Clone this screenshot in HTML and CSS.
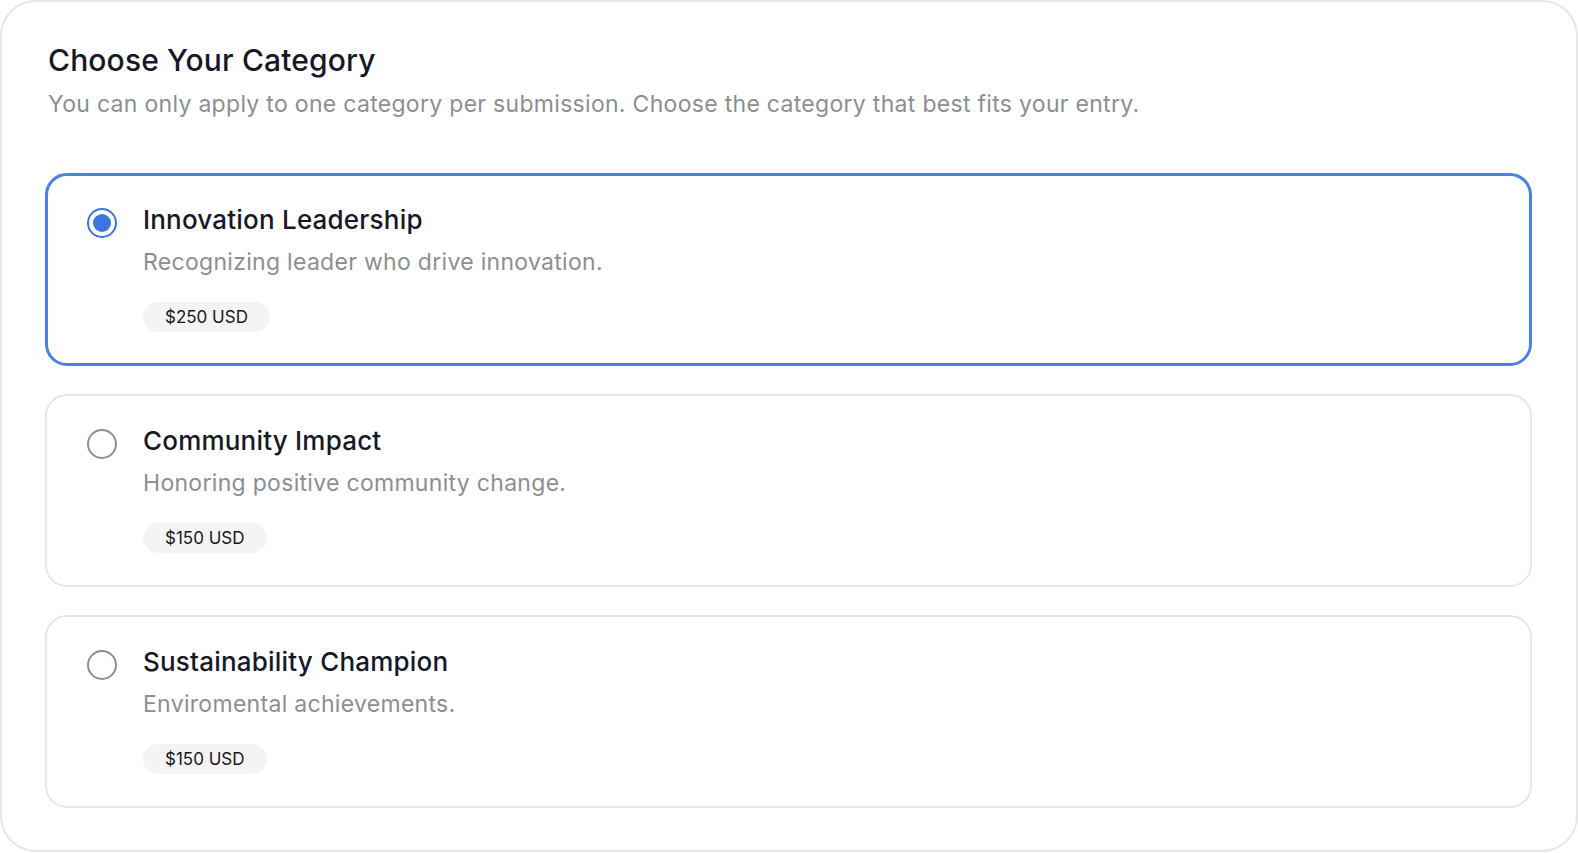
FILE: index.html
```html
<!DOCTYPE html>
<html lang="en">
<head>
<meta charset="utf-8">
<title>Choose Your Category</title>
<link rel="stylesheet" href="styles.css">
</head>
<body>
<main class="panel">
  <header class="panel-head">
    <h1 class="panel-title">Choose Your Category</h1>
    <p class="panel-sub">You can only apply to one category per submission. Choose the category that best fits your entry.</p>
  </header>
  <div class="options">
    <label class="option option--selected">
      <span class="radio radio--on"><span class="radio-dot"></span></span>
      <span class="option-body">
        <span class="option-title">Innovation Leadership</span>
        <span class="option-desc">Recognizing leader who drive innovation.</span>
        <span class="price">$250 USD</span>
      </span>
    </label>
    <label class="option">
      <span class="radio"></span>
      <span class="option-body">
        <span class="option-title">Community Impact</span>
        <span class="option-desc">Honoring positive community change.</span>
        <span class="price">$150 USD</span>
      </span>
    </label>
    <label class="option">
      <span class="radio"></span>
      <span class="option-body">
        <span class="option-title">Sustainability Champion</span>
        <span class="option-desc">Enviromental achievements.</span>
        <span class="price">$150 USD</span>
      </span>
    </label>
  </div>
</main>
</body>
</html>
```
FILE: styles.css
```css
* { box-sizing: border-box; }
html, body { margin: 0; padding: 0; background: #ffffff; }
body {
  font-family: Inter, "Noto Sans", "Liberation Sans", sans-serif;
  color: #161827;
}
.panel {
  width: 1578px;
  height: 852px;
  border: 2px solid #e7e7ea;
  border-radius: 36px;
  background: #ffffff;
  padding: 38px 44px 0 43px;
}
.panel-head { padding-left: 3px; }
.panel-title {
  margin: 0;
  font-size: 30px;
  line-height: 40px;
  font-weight: 500;
  color: #161827;
  letter-spacing: 0.15px;
}
.panel-sub {
  margin: 8px 0 0;
  font-size: 23px;
  line-height: 32px;
  font-weight: 400;
  color: #8d8e92;
  letter-spacing: 0.3px;
}
.options {
  margin-top: 53px;
  display: flex;
  flex-direction: column;
  gap: 28px;
}
.option {
  display: flex;
  align-items: flex-start;
  gap: 26px;
  height: 193px;
  border: 2px solid #e7e7ea;
  border-radius: 22px;
  padding: 27px 40px 0 40px;
}
.option--selected {
  border: 3px solid #4a82e4;
  padding: 26px 39px 0 39px;
}
.radio {
  flex: none;
  width: 30px;
  height: 30px;
  margin-top: 6px;
  border-radius: 50%;
  border: 2px solid #8f8f92;
  display: flex;
  align-items: center;
  justify-content: center;
}
.radio--on { border-color: #3c74e0; }
.radio-dot {
  width: 18px;
  height: 18px;
  border-radius: 50%;
  background: #3c74e0;
}
.option-body {
  display: flex;
  flex-direction: column;
  align-items: flex-start;
}
.option-title {
  font-size: 26px;
  line-height: 36px;
  font-weight: 500;
  color: #161827;
  letter-spacing: 0.2px;
}
.option-desc {
  margin-top: 8px;
  font-size: 23px;
  line-height: 32px;
  color: #8d8e92;
  letter-spacing: 0.3px;
}
.price {
  margin-top: 24px;
  height: 30px;
  line-height: 30px;
  padding: 0 22px;
  border-radius: 15px;
  background: #f4f4f5;
  font-size: 17px;
  font-weight: 400;
  color: #17181c;
}
```
